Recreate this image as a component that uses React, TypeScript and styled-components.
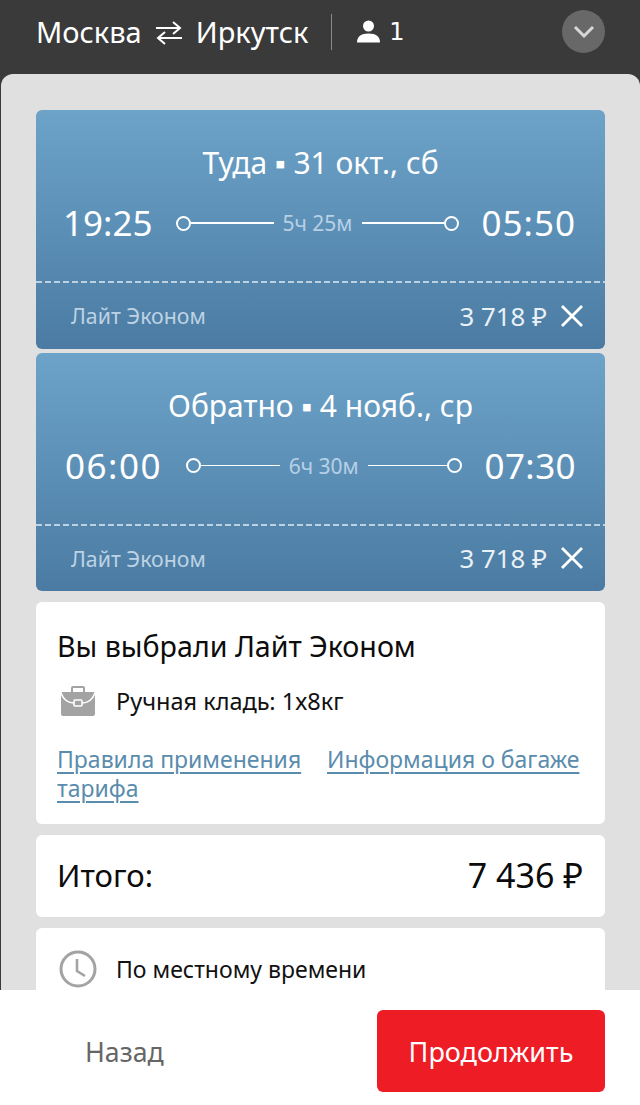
import React from 'react';
import styled, { createGlobalStyle } from 'styled-components';

const GlobalStyle = createGlobalStyle`
	html, body {
		margin: 0;
		padding: 0;
		background: #fff;
	}

	body {
		font-family: "Noto Sans", "Open Sans", sans-serif;
	}

	* {
		box-sizing: border-box;
	}
`;

const Page = styled.div`
	width: 640px;
	height: 1105px;
	display: flex;
	flex-direction: column;
	overflow: hidden;
	background: #3a3a3a;
`;

const Header = styled.header`
	height: 74px;
	flex: none;
	display: flex;
	align-items: center;
	padding: 0 35px 11px 36px;
	color: #fff;
	font-size: 29px;
`;

const RouteIcon = styled.svg`
	width: 26px;
	height: 26px;
	margin: 2px 14px 0 14px;
`;

const Divider = styled.div`
	width: 1px;
	height: 36px;
	background: #8a8a8a;
	margin: 0 25px 0 23px;
`;

const Passengers = styled.div`
	display: flex;
	align-items: center;
	gap: 9px;
	flex: 1;
	font-family: "DejaVu Sans", sans-serif;
	font-size: 24px;
`;

const ToggleButton = styled.button`
	width: 43px;
	height: 43px;
	border: 0;
	border-radius: 50%;
	background: #686868;
	padding: 0;
	display: flex;
	align-items: center;
	justify-content: center;
`;

const Content = styled.main`
	flex: 1;
	min-height: 0;
	overflow: hidden;
	background: #e0e0e0;
	border-radius: 12px 12px 0 0;
	margin-left: 1px;
	padding: 36px 35px 0 35px;
	display: flex;
	flex-direction: column;
`;

const FlightCard = styled.section`
	height: 238.5px;
	flex: none;
	margin-bottom: 4px;
	border-radius: 6px;
	background: linear-gradient(180deg, #6da3c9 0%, #4b7ba2 100%);
	color: #fff;
	display: flex;
	flex-direction: column;

	&:nth-child(2) {
		margin-bottom: 11px;
	}
`;

const FlightTop = styled.div`
	height: 171px;
	flex: none;
	padding-top: 33px;
`;

const Separator = styled.div`
	height: 2px;
	flex: none;
	background: repeating-linear-gradient(90deg, #bcd1e2 0 6px, transparent 6px 9px);
`;

const FlightTitle = styled.div`
	text-align: center;
	font-size: 30px;
	line-height: 40px;
`;

const TimeRow = styled.div`
	display: flex;
	align-items: center;
	margin-top: 18px;
	padding: 0 29px 0 ${(props: { $inset: number }) => props.$inset}px;
`;

const Time = styled.div`
	font-size: 35px;
	line-height: 44px;
	letter-spacing: ${(props: { $tracking: number }) => props.$tracking}px;
`;

const Track = styled.div`
	flex: 1;
	display: flex;
	align-items: center;
	margin: 0 23px 0 24px;
`;

const Dot = styled.span`
	width: 15px;
	height: 15px;
	flex: none;
	border: 2px solid #fff;
	border-radius: 50%;
`;

const TrackLine = styled.span`
	flex: 1;
	height: 1.5px;
	background: #fff;
`;

const Duration = styled.span`
	font-size: 21px;
	color: #b7d0e6;
	margin: 0 9px;
	white-space: nowrap;
`;

const FlightBottom = styled.div`
	flex: 1;
	display: flex;
	align-items: center;
	padding: 0 21px 0 35px;
`;

const FareName = styled.span`
	flex: 1;
	font-size: 21.3px;
	color: #bdd3e4;
`;

const FarePrice = styled.span`
	font-size: 25.8px;
	color: #e9f1f7;
	margin-right: 13px;
`;

const Card = styled.section`
	flex: none;
	background: #fff;
	border-radius: 6px;
	margin-bottom: 11px;
`;

const FareCard = styled(Card)`
	height: 222px;
	padding: 25px 21px 0 21px;
`;

const FareHeading = styled.div`
	font-size: 28.6px;
	line-height: 38px;
	color: #0c0c0c;
`;

const BaggageRow = styled.div`
	display: flex;
	align-items: center;
	margin-top: 17px;
	padding-left: 2px;
	font-size: 23.5px;
	color: #111;
`;

const InfoIcon = styled.svg`
	width: 38px;
	height: 38px;
	flex: none;
	margin-right: 19px;
`;

const LinkRow = styled.div`
	display: flex;
	justify-content: space-between;
	margin-top: 25px;
`;

const TextLink = styled.a`
	font-size: 23px;
	line-height: 29px;
	color: #5a8cad;
	text-decoration: underline;
	text-decoration-thickness: 1.5px;
	text-underline-offset: 4px;
	width: ${(props: { $width: number }) => props.$width}px;
`;

const TotalCard = styled(Card)`
	height: 82px;
	display: flex;
	align-items: center;
	justify-content: space-between;
	padding: 0 22px 2px 21px;
	color: #0c0c0c;
`;

const TotalLabel = styled.span`
	font-size: 31px;
`;

const TotalValue = styled.span`
	font-size: 34px;
`;

const NoteCard = styled(Card)`
	height: 120px;
	margin-bottom: 0;
	padding: 22px 21px 0 23px;
`;

const NoteRow = styled.div`
	display: flex;
	align-items: center;
	font-size: 23px;
	color: #111;
`;

const Footer = styled.footer`
	height: 115px;
	flex: none;
	background: #fff;
	display: flex;
	align-items: center;
	justify-content: space-between;
	padding: 7px 35px 0 85px;
`;

const BackButton = styled.button`
	border: 0;
	padding: 0;
	background: none;
	font: inherit;
	font-size: 26.7px;
	color: #666;
`;

const NextButton = styled.button`
	width: 228px;
	height: 82px;
	border: 0;
	border-radius: 6px;
	background: #ee1c25;
	color: #fff;
	font: inherit;
	font-size: 27px;
`;

const CloseIcon = () => (
	<svg width="24" height="24" viewBox="0 0 24 24" fill="none" stroke="#fff" strokeWidth="2.8">
		<path d="M2 2l20 20M22 2L2 22" />
	</svg>
);

interface FlightProps {
	title: string;
	from: string;
	to: string;
	duration: string;
	inset: number;
	fromTracking: number;
	toTracking: number;
}

const Flight: React.FC<FlightProps> = (props) => (
	<FlightCard>
		<FlightTop>
			<FlightTitle>{props.title}</FlightTitle>
			<TimeRow $inset={props.inset}>
				<Time $tracking={props.fromTracking}>{props.from}</Time>
				<Track>
					<Dot />
					<TrackLine />
					<Duration>{props.duration}</Duration>
					<TrackLine />
					<Dot />
				</Track>
				<Time $tracking={props.toTracking}>{props.to}</Time>
			</TimeRow>
		</FlightTop>
		<Separator />
		<FlightBottom>
			<FareName>Лайт Эконом</FareName>
			<FarePrice>3 718 ₽</FarePrice>
			<CloseIcon />
		</FlightBottom>
	</FlightCard>
);

const App: React.FC = () => (
	<Page>
		<GlobalStyle />
		<Header>
			<span>Москва</span>
			<RouteIcon viewBox="0 0 26 26" fill="none" stroke="#fff" strokeWidth="2">
				<path d="M0 8h24M17 2l7 6-7 6M26 18H2M9 12l-7 6 7 6" />
			</RouteIcon>
			<span>Иркутск</span>
			<Divider />
			<Passengers>
				<svg width="23" height="23" viewBox="0 0 23 23" fill="#fff">
					<circle cx="11.5" cy="6" r="5.5" />
					<path d="M0 22.5c0-6 4-9 11.5-9s11.5 3 11.5 9z" />
				</svg>
				<span>1</span>
			</Passengers>
			<ToggleButton>
				<svg width="22" height="14" viewBox="0 0 22 14" fill="none" stroke="#d8d8d8" strokeWidth="3">
					<path d="M2 2l9 9 9-9" />
				</svg>
			</ToggleButton>
		</Header>
		<Content>
			<Flight
				title="Туда ▪ 31 окт., сб"
				from="19:25"
				to="05:50"
				duration="5ч 25м"
				inset={27}
				fromTracking={0}
				toTracking={1}
			/>
			<Flight
				title="Обратно ▪ 4 нояб., ср"
				from="06:00"
				to="07:30"
				duration="6ч 30м"
				inset={29}
				fromTracking={1.5}
				toTracking={0.4}
			/>
			<FareCard>
				<FareHeading>Вы выбрали Лайт Эконом</FareHeading>
				<BaggageRow>
					<InfoIcon viewBox="0 0 38 38">
						<path
							fill="#a3a3a3"
							d="M12 10V6a2 2 0 0 1 2-2h10a2 2 0 0 1 2 2v4h-2V6H14v4zM4 10h30a2 2 0 0 1 2 2v20a2 2 0 0 1-2 2H4a2 2 0 0 1-2-2V12a2 2 0 0 1 2-2z"
						/>
						<path fill="none" stroke="#fff" strokeWidth="1.6" d="M2 11c3 8 9 10 13 10M36 11c-3 8-9 10-13 10" />
						<rect x="15" y="18" width="8" height="6" rx="1" fill="#a3a3a3" stroke="#fff" strokeWidth="1.6" />
					</InfoIcon>
					<span>Ручная кладь: 1х8кг</span>
				</BaggageRow>
				<LinkRow>
					<TextLink $width={250}>Правила применения тарифа</TextLink>
					<TextLink $width={257}>Информация о багаже</TextLink>
				</LinkRow>
			</FareCard>
			<TotalCard>
				<TotalLabel>Итого:</TotalLabel>
				<TotalValue>7 436 ₽</TotalValue>
			</TotalCard>
			<NoteCard>
				<NoteRow>
					<InfoIcon viewBox="0 0 38 38" fill="none" stroke="#a3a3a3" strokeWidth="3">
						<circle cx="19" cy="19" r="17" />
						<path d="M18 9v12l8 5" strokeWidth="2.6" />
					</InfoIcon>
					<span>По местному времени</span>
				</NoteRow>
			</NoteCard>
		</Content>
		<Footer>
			<BackButton>Назад</BackButton>
			<NextButton>Продолжить</NextButton>
		</Footer>
	</Page>
);

export default App;
